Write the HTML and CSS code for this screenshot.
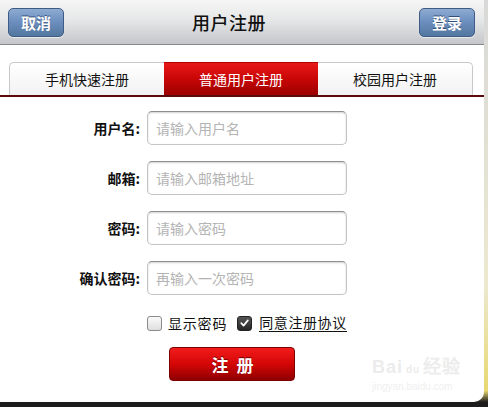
FILE: index.html
```html
<!DOCTYPE html>
<html lang="zh-CN">
<head>
<meta charset="utf-8">
<title>用户注册</title>
<link rel="stylesheet" href="styles.css">
</head>
<body>
<div class="panel">
  <header class="topbar">
    <button class="navbtn">取消</button>
    <h1 class="title">用户注册</h1>
    <button class="navbtn">登录</button>
  </header>

  <div class="tabbar">
    <div class="tabs">
      <div class="tab first">手机快速注册</div>
      <div class="tab active">普通用户注册</div>
      <div class="tab last">校园用户注册</div>
    </div>
  </div>

  <form class="form">
    <label class="label">用户名:</label>
    <input class="field" placeholder="请输入用户名">
    <label class="label">邮箱:</label>
    <input class="field" placeholder="请输入邮箱地址">
    <label class="label">密码:</label>
    <input class="field" placeholder="请输入密码">
    <label class="label">确认密码:</label>
    <input class="field" placeholder="再输入一次密码">
  </form>

  <div class="checks">
    <span class="box"></span>
    <span class="checktext">显示密码</span>
    <span class="box checked"><svg viewBox="0 0 14 14" width="14" height="14"><path d="M3.5 7.2 L6 9.8 L10.6 4.2" fill="none" stroke="#fff" stroke-width="1.8" stroke-linecap="round" stroke-linejoin="round"/></svg></span>
    <span class="checktext agree">同意注册协议</span>
  </div>

  <div class="submitrow">
    <button class="submit">注 册</button>
  </div>

  <div class="watermark">
    <div class="wm-main">Bai<span class="paw">du</span>经验</div>
    <div class="wm-sub">jingyan.baidu.com</div>
  </div>
</div>
</body>
</html>
```

FILE: styles.css
```css
html, body {
  margin: 0;
  padding: 0;
}
body {
  width: 488px;
  height: 407px;
  overflow: hidden;
  background: linear-gradient(to bottom, #d8d8d8 0%, #ece9cf 70%, #e8d870 96%, #1c1c1c 98.8%);
  font-family: "Noto Sans CJK SC", "Noto Sans", sans-serif;
}
.panel {
  position: relative;
  width: 484px;
  height: 402px;
  background: #fff;
  border-bottom-right-radius: 10px;
  overflow: hidden;
}
.topbar {
  height: 44px;
  display: flex;
  align-items: center;
  padding: 0 9px 0 8px;
  background: linear-gradient(to bottom, #f6f6f6 0%, #e6e7e8 45%, #c4c6ca 100%);
  border-bottom: 1px solid #85878b;
}
.navbtn {
  width: 56px;
  height: 29px;
  margin: 0;
  padding: 0;
  border: 1px solid #3f5c86;
  border-radius: 5px;
  background: linear-gradient(to bottom, #8eabd2 0%, #6a8dbd 50%, #54779f 100%);
  color: #fff;
  font-family: "Noto Sans CJK SC", sans-serif;
  font-size: 15px;
  font-weight: bold;
  text-shadow: 0 -1px 0 #34507a;
  box-shadow: 0 1px 1px rgba(255,255,255,0.6);
}
.title {
  flex: 1;
  margin: 0;
  padding-left: 128px;
  font-size: 18px;
  font-weight: 500;
  color: #111;
  letter-spacing: 0.5px;
}
.tabbar {
  margin-top: 17px;
  border-bottom: 2px solid #5a0a0a;
}
.tabs {
  display: flex;
  margin: 0 11px 0 9px;
  height: 33px;
}
.tab {
  flex: 1;
  display: flex;
  align-items: center;
  justify-content: center;
  font-size: 14px;
  color: #111;
  background: linear-gradient(to bottom, #ffffff, #f2f2f2);
  border-top: 1px solid #c8c8c8;
}
.tab.first {
  border-left: 1px solid #c8c8c8;
  border-top-left-radius: 5px;
}
.tab.last {
  border-right: 1px solid #c8c8c8;
  border-top-right-radius: 5px;
}
.tab.active {
  color: #fff;
  background: linear-gradient(to bottom, #e81818 0%, #c80606 50%, #9c0000 100%);
  border-top-color: #b00000;
}
.form {
  display: grid;
  grid-template-columns: 140px 200px;
  column-gap: 7px;
  row-gap: 16px;
  margin: 14px 0 0 0;
  align-items: center;
}
.label {
  justify-self: end;
  font-size: 14px;
  font-weight: bold;
  color: #111;
}
.field {
  box-sizing: border-box;
  width: 200px;
  height: 34px;
  margin: 0;
  padding: 0 8px;
  border: 1px solid #c4c4c4;
  border-top-color: #8e8e8e;
  border-radius: 5px;
  box-shadow: inset 0 1px 2px rgba(0,0,0,0.18);
  font-family: "Noto Sans CJK SC", sans-serif;
  font-size: 14px;
  background: #fff;
}
.field::placeholder {
  color: #b4b4b4;
}
.checks {
  display: flex;
  align-items: center;
  margin: 20px 0 0 147px;
  height: 16px;
}
.box {
  box-sizing: border-box;
  width: 15px;
  height: 15px;
  border: 1px solid #8a8a8a;
  border-radius: 3px;
  background: linear-gradient(to bottom, #fafafa, #dedede);
  display: inline-flex;
  align-items: center;
  justify-content: center;
}
.box.checked {
  margin-left: 10px;
  border-color: #222;
  background: linear-gradient(to bottom, #555, #262626);
}
.checktext {
  margin-left: 6px;
  font-size: 14px;
  color: #111;
  letter-spacing: 0.8px;
}
.agree {
  margin-left: 7px;
  letter-spacing: 0.6px;
  border-bottom: 1px solid #111;
  line-height: 17px;
}
.submitrow {
  margin: 16px 0 0 169px;
}
.submit {
  width: 126px;
  height: 34px;
  margin: 0;
  padding: 0 0 0 3px;
  border: 1px solid #7a0000;
  border-radius: 4px;
  background: linear-gradient(to bottom, #f21c1c 0%, #d50606 50%, #8e0000 100%);
  color: #fff;
  font-family: "Noto Sans CJK SC", sans-serif;
  font-size: 17px;
  font-weight: bold;
  letter-spacing: 2px;
  text-shadow: 0 -1px 0 #700;
}
.watermark {
  position: absolute;
  left: 372px;
  top: 356px;
  color: #ececec;
  font-family: "Liberation Sans", sans-serif;
}
.wm-main {
  font-size: 18px;
  font-weight: bold;
  line-height: 22px;
  letter-spacing: 1px;
}
.paw {
  font-size: 10px;
  margin: 0 3px;
}
.wm-sub {
  font-size: 10px;
  line-height: 12px;
  color: #efefef;
}
```
